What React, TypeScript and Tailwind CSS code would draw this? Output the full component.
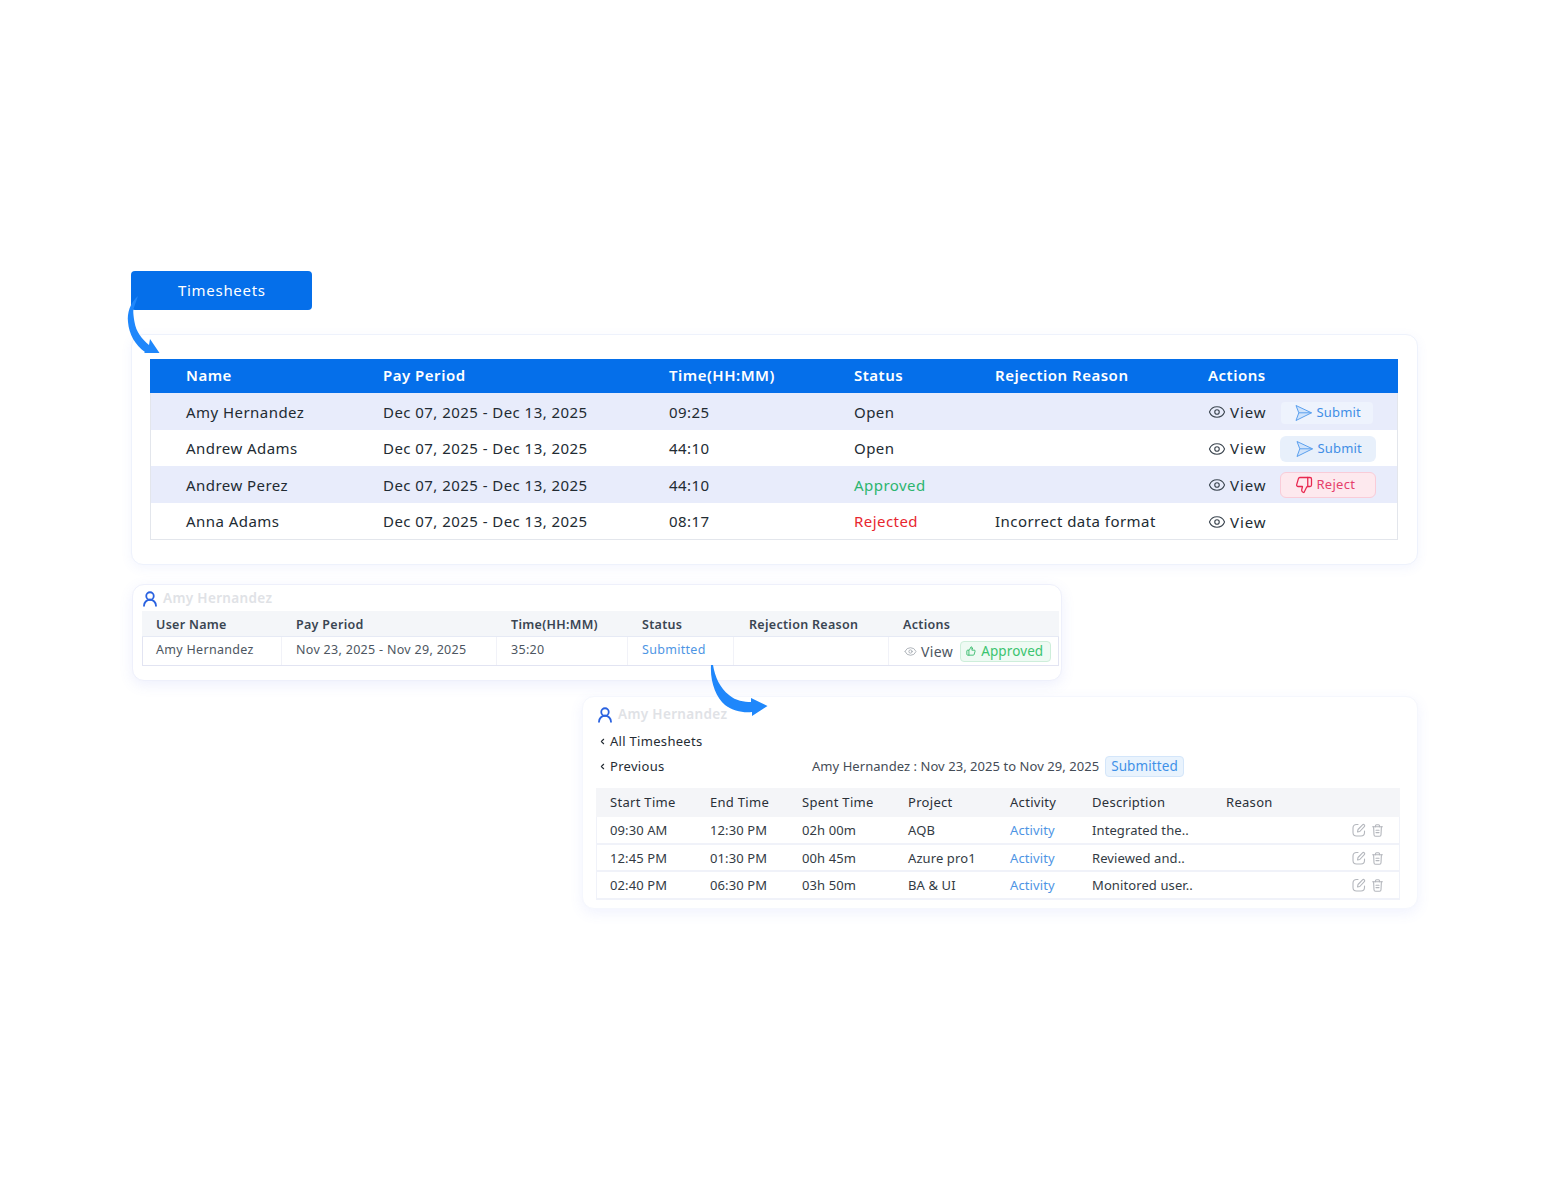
import { ChevronLeft, Eye, ThumbsDown, ThumbsUp, UserRound } from "lucide-react";

type MainRow = { name: string; time: string; status: string; reason?: string; action?: "submit" | "submit-big" | "reject" };

const mainRows: MainRow[] = [
  { name: "Amy Hernandez", time: "09:25", status: "Open", action: "submit" },
  { name: "Andrew Adams", time: "44:10", status: "Open", action: "submit-big" },
  { name: "Andrew Perez", time: "44:10", status: "Approved", action: "reject" },
  { name: "Anna Adams", time: "08:17", status: "Rejected", reason: "Incorrect data format" },
];

const entries = [
  { start: "09:30 AM", end: "12:30 PM", spent: "02h 00m", project: "AQB", description: "Integrated the.." },
  { start: "12:45 PM", end: "01:30 PM", spent: "00h 45m", project: "Azure pro1", description: "Reviewed and.." },
  { start: "02:40 PM", end: "06:30 PM", spent: "03h 50m", project: "BA & UI", description: "Monitored user.." },
];

const mainCols = "grid grid-cols-[197px_286px_185px_141px_213px_1fr] items-center";
const midCols = "grid grid-cols-[139px_215px_131px_106px_155px_1fr] items-center";
const entryCols = "grid grid-cols-[100px_92px_106px_102px_82px_134px_1fr] items-center";

function PlaneIcon() {
  return (
    <svg width="17" height="18" viewBox="0 0 17 18" fill="#d0e3fb" stroke="#5ba0ee" strokeWidth="1" strokeLinejoin="round" className="shrink-0">
      <path d="M1 1.500 L16.500 8.800 L1 16.500 L3.800 8.800 Z" />
      <path d="M3.800 8.800 H16.500" fill="none" />
    </svg>
  );
}

function EditIcon() {
  return (
    <svg width="14" height="14" viewBox="0 0 14 14" fill="none" stroke="#b4b7bd" strokeWidth="1.1" strokeLinecap="round" strokeLinejoin="round">
      <path d="M6 1.500 H4.500 C2.500 1.500 1 3 1 5 V9.500 C1 11.500 2.500 13 4.500 13 H9 C11 13 12.500 11.500 12.500 9.500 V8" />
      <path d="M5.500 9 L6 6.500 L10.500 1.800 C11 1.300 11.800 1.300 12.300 1.800 C12.800 2.300 12.800 3.100 12.300 3.600 L7.800 8.500 Z" />
    </svg>
  );
}

function BinIcon() {
  return (
    <svg width="11" height="13" viewBox="0 0 11 13" fill="none" stroke="#b4b7bd" strokeWidth="1.1" strokeLinecap="round" strokeLinejoin="round">
      <path d="M0.600 2.800 H10.400" />
      <path d="M3.500 2.800 V1.800 C3.500 1.200 3.900 0.800 4.500 0.800 H6.500 C7.100 0.800 7.500 1.200 7.500 1.800 V2.800" />
      <path d="M1.600 2.800 L2 10.800 C2 11.700 2.700 12.300 3.500 12.300 H7.500 C8.300 12.300 9 11.700 9 10.800 L9.400 2.800" />
      <path d="M4 6.200 H7" />
      <path d="M4 8.600 H7" />
    </svg>
  );
}

function MainAction({ action }: { action?: MainRow["action"] }) {
  if (action === "submit") {
    return (
      <span className="ml-[15px] flex h-[22px] w-[92px] translate-y-px items-center gap-[4px] rounded bg-[#eef3fd] pl-3.5 text-[13px] tracking-[0.2px] text-[#3f8ee6]">
        <PlaneIcon />
        Submit
      </span>
    );
  }
  if (action === "submit-big") {
    return (
      <span className="ml-[14px] flex h-[26px] w-[96px] items-center gap-[4px] rounded-md bg-[#e8f0fb] pl-4 text-[13px] tracking-[0.2px] text-[#3f8ee6]">
        <PlaneIcon />
        Submit
      </span>
    );
  }
  if (action === "reject") {
    return (
      <span className="ml-[14px] flex h-[26px] w-[96px] items-center gap-[3px] rounded-md border border-[#f9ccd8] bg-[#fde9ee] pl-[14px] text-[13px] tracking-[0.3px] text-[#e63f6b]">
        <ThumbsDown className="size-[18px] text-[#e8274f]" strokeWidth={1.7} />
        Reject
      </span>
    );
  }
  return null;
}

function statusColor(status: string) {
  if (status === "Approved") return "text-[#2cb56f]";
  if (status === "Rejected") return "text-[#e8262f]";
  return "text-[#222b33]";
}

function UserTitle() {
  return (
    <div className="flex h-[21px] items-center gap-1">
      <UserRound className="size-[18px] text-[#2a62e0]" strokeWidth={2.4} />
      <span className="text-[13.5px] font-semibold tracking-[0.35px] text-[#e0e2e6]">Amy Hernandez</span>
    </div>
  );
}

export default function App() {
  return (
    <div className="relative min-h-[1200px] bg-white pt-[271px] pl-[131px] font-['Noto_Sans',sans-serif] text-[#222b33]">
      <button className="block h-[39px] w-[181px] rounded-[4px] bg-[#056fea] pb-px pl-[47px] text-left text-[15px] tracking-[0.7px] text-white">
        Timesheets
      </button>

      <section className="mt-6 h-[231px] w-[1287px] rounded-xl border border-[#eef2fc] bg-white px-[18px] pt-6 shadow-[0_3px_12px_rgba(90,120,240,0.07)]">
        <div className="w-[1248px] border-x border-b border-[#e3e6ec] text-[15px] tracking-[0.45px]">
          <div className={`${mainCols} -mx-px h-[34px] bg-[#056fea] pb-[2px] pl-9 font-semibold tracking-[0.5px] text-white`}>
            <span>Name</span>
            <span>Pay Period</span>
            <span>Time(HH:MM)</span>
            <span>Status</span>
            <span>Rejection Reason</span>
            <span>Actions</span>
          </div>
          {mainRows.map((row, i) => (
            <div key={row.name} className={`${mainCols} pl-[35px] ${i % 2 === 0 ? "h-[37px] bg-[#e8ecfb]" : "h-[36px] bg-white"} ${i === 3 ? "" : "pt-px"}`}>
              <span>{row.name}</span>
              <span>Dec 07, 2025 - Dec 13, 2025</span>
              <span>{row.time}</span>
              <span className={statusColor(row.status)}>{row.status}</span>
              <span>{row.reason}</span>
              <div className="flex items-center">
                <span className={`flex items-center gap-[4px] ${i === 3 ? "translate-y-px" : ""}`}>
                  <Eye className="size-[18px] text-[#3c4650]" strokeWidth={1.5} />
                  <span className="tracking-[0.9px]">View</span>
                </span>
                <MainAction action={row.action} />
              </div>
            </div>
          ))}
        </div>
      </section>

      <section className="mt-[19px] ml-px h-[97px] w-[930px] rounded-xl border border-[#eef0fb] bg-white pt-[3px] pl-[9px] shadow-[0_4px_14px_rgba(90,110,240,0.1)]">
        <div className="-ml-px">
          <UserTitle />
        </div>
        <div className="mt-[2px] w-[917px] border-x border-b border-[#e2e4f2] text-[12.5px] tracking-[0.3px]">
          <div className={`${midCols} -mx-px h-[26px] border-b border-[#e6eaf5] bg-[#f4f6f9] pt-[3px] font-semibold text-[#3a4552]`}>
            <span className="pl-3.5">User Name</span>
            <span className="pl-[15px]">Pay Period</span>
            <span className="pl-[15px]">Time(HH:MM)</span>
            <span className="pl-[15px]">Status</span>
            <span className="pl-4">Rejection Reason</span>
            <span className="pl-[15px]">Actions</span>
          </div>
          <div className={`${midCols} h-[28px] text-[#4d5661]`}>
            <span className="flex h-full items-center border-r border-[#f1f2f8] pb-[2px] pl-[13px]">Amy Hernandez</span>
            <span className="flex h-full items-center border-r border-[#f1f2f8] pb-[2px] pl-3.5">Nov 23, 2025 - Nov 29, 2025</span>
            <span className="flex h-full items-center border-r border-[#f1f2f8] pb-[2px] pl-3.5">35:20</span>
            <span className="flex h-full items-center border-r border-[#f1f2f8] pb-[2px] pl-3.5 text-[#4e95e4]">Submitted</span>
            <span className="h-full border-r border-[#f1f2f8]" />
            <div className="flex items-center pl-[15px]">
              <Eye className="size-[13px] text-[#a4a9b0]" strokeWidth={1.6} />
              <span className="ml-1 text-[14px] tracking-[0.4px]">View</span>
              <span className="ml-[7px] flex h-[21px] w-[91px] items-center gap-[5px] rounded border border-[#cdeeda] bg-[#eefaf3] pl-[5px] text-[13.5px] tracking-[0.1px] text-[#3bc46f]">
                <ThumbsUp className="size-[10px] text-[#27b45f]" strokeWidth={2} />
                Approved
              </span>
            </div>
          </div>
        </div>
      </section>

      <section className="mt-[15px] ml-[451px] h-[213px] w-[836px] rounded-xl border border-[#f5f7fd] bg-white pt-[7px] pl-[13px] shadow-[0_4px_14px_rgba(90,110,240,0.09)]">
        <UserTitle />
        <div className="mt-[6px] flex h-[21px] items-center gap-[3px] pl-[2px] text-[13px] tracking-[0.3px] text-[#252c34]">
          <ChevronLeft className="size-[9px]" strokeWidth={3} />
          <span>All Timesheets</span>
        </div>
        <div className="mt-1 flex h-[21px] items-center pl-[2px] text-[13px] tracking-[0.3px] text-[#252c34]">
          <ChevronLeft className="size-[9px]" strokeWidth={3} />
          <span className="ml-[3px] w-[202px]">Previous</span>
          <span className="w-[293px] whitespace-nowrap tracking-[0.05px] text-[#444c56]">Amy Hernandez : Nov 23, 2025 to Nov 29, 2025</span>
          <span className="flex h-[21px] w-[79px] items-center justify-center rounded border border-[#d4e6fa] bg-[#e9f3fd] text-[13.5px] tracking-[0.1px] text-[#3f91e8]">Submitted</span>
        </div>
        <div className="mt-[11px] w-[804px] text-[13px] text-[#333b44]">
          <div className={`${entryCols} h-[29px] bg-[#f4f5f8] pl-3.5 tracking-[0.3px] text-[#2a3038]`}>
            <span>Start Time</span>
            <span>End Time</span>
            <span>Spent Time</span>
            <span>Project</span>
            <span>Activity</span>
            <span>Description</span>
            <span>Reason</span>
          </div>
          {entries.map((entry, i) => (
            <div key={entry.start} className={`${entryCols} h-[27.5px] border-x border-b-2 border-[#f0f2f9] bg-white pl-[13px] tracking-[0.1px] ${i === 1 ? "pt-[2px]" : "pt-px"}`}>
              <span>{entry.start}</span>
              <span>{entry.end}</span>
              <span>{entry.spent}</span>
              <span>{entry.project}</span>
              <span className="text-[#4e95e4]">Activity</span>
              <span className="whitespace-nowrap">{entry.description}</span>
              <div className="flex items-center justify-end gap-[6px] pr-4">
                <EditIcon />
                <BinIcon />
              </div>
            </div>
          ))}
        </div>
      </section>

      <svg className="absolute left-[120px] top-[290px]" width="50" height="70" viewBox="120 290 50 70" fill="#1f87fb">
        <path d="M138 296 C130 303 127 313 128 322 C129 334 135 345 145 352 L144 353 L159.500 353 L150 339 L149 345 C142 339 136 332 134.500 322 C133.500 316 133 311 133.500 309 Z" />
      </svg>
      <svg className="absolute left-[705px] top-[660px]" width="70" height="60" viewBox="705 660 70 60" fill="#1f87fb">
        <path d="M711 665 L713 665 C715 677 720 688 729 695 C736 701 744 702 751 702 L751 698 L767.500 706 L752 716 L752 712 C743 713 733 711 725 705 C716 697 710 682 711 665 Z" />
      </svg>
    </div>
  );
}
